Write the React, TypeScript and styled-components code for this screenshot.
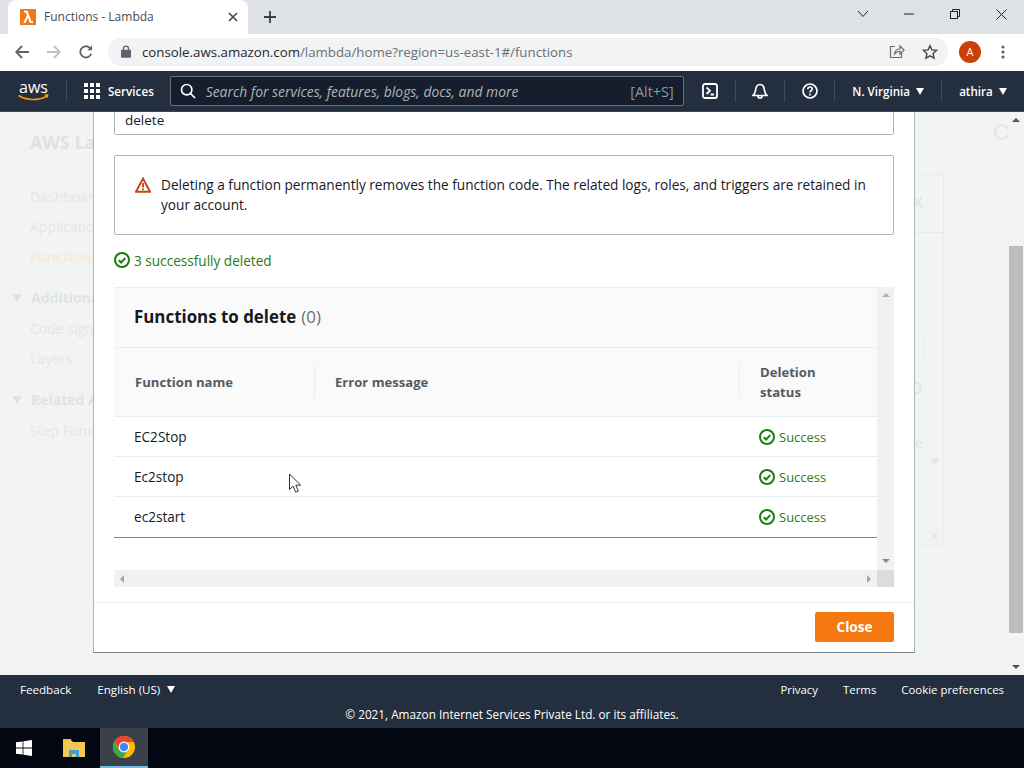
import React from "react";
import styled, { createGlobalStyle } from "styled-components";

const Global = createGlobalStyle`
  html, body { margin: 0; padding: 0; background: #fff; }
  * { box-sizing: border-box; }
  body { font-family: "Open Sans", "Noto Sans", "Liberation Sans", sans-serif; overflow: hidden; }
`;

const Page = styled.div`
  position: relative;
  width: 1024px;
  height: 768px;
  overflow: hidden;
  display: flex;
  flex-direction: column;
`;

/* ---------- Browser tab strip ---------- */
const TabStrip = styled.div`
  height: 34px;
  background: #dee1e6;
  display: flex;
  align-items: stretch;
  padding-left: 8px;
`;
const Tab = styled.div`
  width: 240px;
  background: #fff;
  border-radius: 8px 8px 0 0;
  display: flex;
  align-items: center;
  padding: 0 10px 1px 12px;
  gap: 8px;
`;
const TabTitle = styled.span`
  flex: 1;
  font-size: 12px;
  color: #4a4d51;
  font-family: "Open Sans", sans-serif;
`;
const NewTab = styled.div`
  width: 44px;
  display: flex;
  align-items: center;
  justify-content: center;
`;
const WindowControls = styled.div`
  margin-left: auto;
  display: flex;
  align-items: flex-start;
  padding-top: 7px;
`;
const WinButton = styled.div`
  width: 46px;
  height: 14px;
  display: flex;
  align-items: center;
  justify-content: center;
`;

/* ---------- Browser toolbar ---------- */
const Toolbar = styled.div`
  height: 37px;
  background: #fff;
  display: flex;
  align-items: center;
  padding: 0 0 2px 6px;
`;
const NavIcon = styled.div`
  width: 32px;
  height: 28px;
  display: flex;
  align-items: center;
  justify-content: center;
`;
const Omnibox = styled.div`
  width: 840px;
  height: 28px;
  margin-left: 6px;
  background: #f1f3f4;
  border-radius: 14px;
  display: flex;
  align-items: center;
  padding: 0 10px 0 13px;
`;
const Url = styled.div`
  flex: 1;
  margin-left: 11px;
  font-size: 13.28px;
  color: #6b6f73;
  font-family: "Open Sans", sans-serif;
  white-space: nowrap;
`;
const UrlHost = styled.span`
  color: #26282b;
`;
const OmniIcons = styled.div`
  display: flex;
  align-items: center;
  gap: 17px;
`;
const Avatar = styled.div`
  width: 22px;
  height: 22px;
  margin-left: 11px;
  border-radius: 50%;
  background: #cb400a;
  color: #fff;
  font-size: 11px;
  display: flex;
  align-items: center;
  justify-content: center;
`;
const MenuDots = styled.div`
  margin-left: 10px;
  width: 24px;
  display: flex;
  justify-content: center;
`;

/* ---------- AWS nav ---------- */
const AwsNav = styled.div`
  height: 41px;
  background: #232f3e;
  border-bottom: 1px solid #3a4654;
  display: flex;
  align-items: center;
  color: #fff;
`;
const LogoSlot = styled.div`
  width: 66px;
  padding-left: 18px;
  display: flex;
`;
const NavSep = styled.div`
  width: 1px;
  height: 22px;
  background: #3f4b5b;
`;
const ServicesBtn = styled.div`
  display: flex;
  align-items: center;
  margin-left: 17px;
  gap: 8px;
  font-size: 11.7px;
  font-weight: 600;
  width: 86px;
`;
const SearchBox = styled.div`
  width: 515px;
  height: 30px;
  margin-right: 2px;
  background: #161e2d;
  border: 1px solid #687078;
  border-radius: 2px;
  display: flex;
  align-items: center;
  padding: 0 9px 0 9px;
`;
const SearchText = styled.span`
  flex: 1;
  margin-left: 10px;
  font-style: italic;
  font-size: 13.9px;
  color: #aab7b8;
  white-space: nowrap;
`;
const SearchKey = styled.span`
  font-size: 14.4px;
  color: #8a9a9b;
`;
const NavIconSlot = styled.div`
  width: 49px;
  display: flex;
  justify-content: center;
`;
const NavDrop = styled.div<{ $w: number }>`
  width: ${(p) => p.$w}px;
  padding-left: 17px;
  display: flex;
  align-items: center;
  gap: 6px;
  font-size: 11.6px;
  font-weight: 600;
  white-space: nowrap;
`;
const Caret = styled.span`
  display: inline-block;
  width: 0;
  height: 0;
  border-left: 4px solid transparent;
  border-right: 4px solid transparent;
  border-top: 7px solid #fff;
`;

/* ---------- Content ---------- */
const Content = styled.div`
  position: relative;
  flex: 1;
  background: #f2f3f3;
  display: flex;
  overflow: hidden;
`;
const Sidebar = styled.div`
  width: 281px;
  padding: 20px 0 0 30px;
  border-right: 1px solid #eef0f0;
  color: #e3e6e6;
  font-size: 14px;
`;
const SideTitle = styled.div`
  font-size: 18px;
  font-weight: 700;
  color: #dfe2e2;
  margin-bottom: 30px;
  line-height: 20px;
`;
const SideLink = styled.div<{ $active?: boolean }>`
  height: 30px;
  line-height: 30px;
  color: ${(p) => (p.$active ? "#f8eadd" : "#e4e7e7")};
  font-weight: ${(p) => (p.$active ? 700 : 400)};
`;
const SideGroup = styled.div`
  height: 32px;
  line-height: 32px;
  margin: 10px 0 0 -18px;
  display: flex;
  align-items: center;
  gap: 9px;
  font-weight: 700;
  color: #e0e3e3;
`;
const SideCaret = styled.span`
  width: 0;
  height: 0;
  border-left: 5px solid transparent;
  border-right: 5px solid transparent;
  border-top: 8px solid #dfe2e2;
`;
const MainBg = styled.div`
  position: relative;
  flex: 1;
`;
const FaintCard = styled.div`
  position: absolute;
  left: 450px;
  top: 62px;
  width: 213px;
  height: 59px;
  border: 1px solid #e8eaea;
`;
const FaintPanel = styled.div`
  position: absolute;
  left: 450px;
  top: 121px;
  width: 213px;
  height: 313px;
  border-right: 1px solid #eaecec;
  border-bottom: 1px solid #e8eaea;
`;
const FaintClose = styled.svg`
  position: absolute;
  left: 632px;
  top: 84px;
`;
const FaintField = styled.div`
  position: absolute;
  left: 620px;
  top: 221px;
  width: 23px;
  height: 29px;
  border: 1px solid #eaecec;
`;
const FaintGear = styled.div`
  position: absolute;
  left: 627px;
  top: 269px;
  width: 14px;
  height: 14px;
  border: 3px solid #e6e8e8;
  border-radius: 50%;
`;
const FaintLetter = styled.span`
  position: absolute;
  left: 634px;
  top: 321px;
  font-size: 14px;
  line-height: 20px;
  color: #e3e5e5;
`;
const FaintTriangle = styled.span`
  position: absolute;
  left: 649px;
  top: 346px;
  width: 0;
  height: 0;
  border-left: 5px solid transparent;
  border-right: 5px solid transparent;
  border-top: 8px solid #e6e8e8;
`;
const FaintArrow = styled.span`
  position: absolute;
  left: 652px;
  top: 420px;
  width: 0;
  height: 0;
  border-top: 4px solid transparent;
  border-bottom: 4px solid transparent;
  border-left: 5px solid #e3e5e5;
`;
const FaintRail = styled.div`
  width: 25px;
  border-left: 1px solid #eef0f0;
  position: relative;
`;
const FaintInfo = styled.div`
  position: absolute;
  left: 10px;
  top: 12px;
  width: 16px;
  height: 16px;
  border: 2px solid #e3e6e6;
  border-radius: 50%;
`;
const PageScrollbar = styled.div`
  width: 16px;
  background: #f2f3f3;
  display: flex;
  flex-direction: column;
  align-items: center;
  justify-content: space-between;
  position: relative;
`;
const PageThumb = styled.div`
  position: absolute;
  left: 1px;
  top: 134px;
  width: 14px;
  height: 387px;
  background: #bcbcbc;
`;
const ArrowUp = styled.span<{ $c: string; $m?: number }>`
  width: 0;
  height: 0;
  margin-top: ${(p) => p.$m ?? 0}px;
  border-left: 4px solid transparent;
  border-right: 4px solid transparent;
  border-bottom: 4px solid ${(p) => p.$c};
`;
const ArrowDown = styled.span<{ $c: string; $m?: number }>`
  width: 0;
  height: 0;
  margin-bottom: ${(p) => p.$m ?? 0}px;
  border-left: 4px solid transparent;
  border-right: 4px solid transparent;
  border-top: 4px solid ${(p) => p.$c};
`;
const ArrowLeft = styled.span`
  width: 0;
  height: 0;
  border-top: 4px solid transparent;
  border-bottom: 4px solid transparent;
  border-right: 4px solid #a3a3a3;
`;
const ArrowRight = styled.span`
  width: 0;
  height: 0;
  border-top: 4px solid transparent;
  border-bottom: 4px solid transparent;
  border-left: 4px solid #a3a3a3;
`;

/* ---------- Modal ---------- */
const Modal = styled.div`
  position: absolute;
  left: 93px;
  top: 0;
  width: 822px;
  height: 541px;
  background: #fff;
  border: 1px solid #aab7b8;
  border-top: none;
  border-bottom: 1px solid #7c8688;
  display: flex;
  flex-direction: column;
  overflow: hidden;
`;
const ModalBody = styled.div`
  flex: 1;
  padding: 0 20px;
  margin-top: -9px;
  display: flex;
  flex-direction: column;
`;
const ConfirmInput = styled.div`
  height: 32px;
  flex: none;
  border: 1px solid #aab7b8;
  border-radius: 2px;
  padding: 0 10px;
  font-size: 13.5px;
  line-height: 32px;
  color: #16191f;
`;
const Alert = styled.div`
  margin-top: 20px;
  flex: none;
  height: 80px;
  border: 1px solid #aab7b8;
  border-radius: 2px;
  padding: 19px 20px 0 20px;
  display: flex;
  gap: 10px;
  font-size: 13.64px;
  line-height: 20px;
  color: #16191f;
`;
const AlertIcon = styled.div`
  flex: none;
  margin-top: 2px;
  height: 16px;
`;
const AlertText = styled.div`
  width: 716px;
`;
const SuccessLine = styled.div`
  margin-top: 15px;
  height: 20px;
  display: flex;
  align-items: center;
  gap: 4px;
  font-size: 13.6px;
  color: #2b7a12;
`;
const TablePanel = styled.div`
  margin-top: 17px;
  width: 780px;
  height: 300px;
  flex: none;
  display: grid;
  grid-template-columns: 763px 17px;
  grid-template-rows: 283px 17px;
`;
const TableArea = styled.div`
  display: flex;
  flex-direction: column;
  overflow: hidden;
`;
const PanelHeader = styled.div`
  height: 61px;
  flex: none;
  background: #fafafa;
  border-top: 1px solid #eaeded;
  border-bottom: 1px solid #eaeded;
  padding: 0 0 2px 20px;
  display: flex;
  align-items: center;
  font-size: 16.9px;
  font-weight: 700;
  color: #16191f;
`;
const PanelCount = styled.span`
  font-weight: 400;
  color: #687078;
  margin-left: 5px;
`;
const Grid = styled.div`
  display: grid;
  grid-template-columns: 200px 425px 138px;
`;
const HeadCell = styled.div`
  height: 69px;
  background: #fafafa;
  border-bottom: 1px solid #eaeded;
  display: flex;
  align-items: center;
  font-size: 13.1px;
  line-height: 20px;
  font-weight: 700;
  color: #545b64;
  padding-left: 21px;
  position: relative;
  & + &::before {
    content: "";
    position: absolute;
    left: 0;
    top: 16px;
    height: 34px;
    width: 1px;
    background: #eaeded;
  }
`;
const Cell = styled.div<{ $last?: boolean }>`
  height: ${(p) => (p.$last ? 41 : 40)}px;
  display: flex;
  align-items: center;
  font-size: 13.6px;
  color: #16191f;
  padding: 0 0 ${(p) => (p.$last ? 1 : 0)}px 20px;
  gap: 4px;
  border-bottom: 1px solid ${(p) => (p.$last ? "#7d8a8e" : "#eaeded")};
`;
const StatusText = styled.span`
  color: #2b7a12;
  font-size: 13px;
`;
const VTrack = styled.div`
  background: #f1f1f1;
  display: flex;
  flex-direction: column;
  align-items: center;
  justify-content: space-between;
  padding: 6px 0 7px;
`;
const HTrack = styled.div`
  background: #f1f1f1;
  display: flex;
  align-items: center;
  justify-content: space-between;
  padding: 0 6px;
`;
const ScrollCorner = styled.div`
  background: #dcdcdc;
`;
const ModalFooter = styled.div`
  height: 50px;
  flex: none;
  border-top: 1px solid #eaeded;
  display: flex;
  justify-content: flex-end;
  align-items: flex-start;
  padding: 9px 20px 0 0;
`;
const CloseButton = styled.button`
  width: 79px;
  height: 30px;
  padding: 0 0 2px;
  background: #f6790f;
  border: none;
  border-radius: 2px;
  color: #fff;
  font-family: inherit;
  font-size: 13.6px;
  font-weight: 700;
`;

/* ---------- Footer ---------- */
const AwsFooter = styled.div`
  height: 53px;
  background: #232f3e;
  color: #fff;
  font-size: 11.6px;
  font-weight: 500;
  padding: 0 20px;
  display: flex;
  flex-direction: column;
`;
const FooterTop = styled.div`
  height: 30px;
  display: flex;
  align-items: center;
  padding-bottom: 2px;
`;
const FooterLang = styled.div`
  margin-left: 26px;
  display: flex;
  align-items: center;
  gap: 7px;
`;
const FooterLinks = styled.div`
  margin-left: auto;
  display: flex;
  gap: 25px;
  font-size: 11.4px;
`;
const Copyright = styled.div`
  text-align: center;
  margin-top: 1px;
  font-size: 11.78px;
`;

/* ---------- Taskbar ---------- */
const Taskbar = styled.div`
  height: 40px;
  background: #030712;
  display: flex;
  align-items: stretch;
`;
const TaskSlot = styled.div<{ $w: number; $active?: boolean }>`
  width: ${(p) => p.$w}px;
  display: flex;
  align-items: center;
  justify-content: center;
  background: ${(p) => (p.$active ? "#3a4148" : "transparent")};
  border-bottom: ${(p) => (p.$active ? "2px solid #76b9ed" : "none")};
`;

const Cursor = styled.svg`
  position: absolute;
  left: 288px;
  top: 473px;
`;

const Check = () => (
  <svg width="16" height="16" viewBox="0 0 16 16" fill="none" stroke="#1d7a10" strokeWidth="2">
    <circle cx="8" cy="8" r="7" />
    <path d="M4.8 8.2l2.3 2.3 4.2-4.4" />
  </svg>
);

const rows = ["EC2Stop", "Ec2stop", "ec2start"];

export default function App() {
  return (
    <Page>
      <Global />
      <TabStrip>
        <Tab>
          <svg width="16" height="16" viewBox="0 0 16 16">
            <rect width="16" height="16" fill="#ed7b1c" />
            <path d="M3.2 14L6.9 6.5 6 3.6H4V1.8h3.5L11.3 12H13v2H9.8L8 8.8 5.5 14z" fill="#fff" />
          </svg>
          <TabTitle>Functions - Lambda</TabTitle>
          <svg width="10" height="10" viewBox="0 0 10 10" stroke="#45484c" strokeWidth="1.7">
            <path d="M1 1l8 8M9 1l-8 8" />
          </svg>
        </Tab>
        <NewTab>
          <svg width="12" height="12" viewBox="0 0 12 12" stroke="#3c4043" strokeWidth="1.8">
            <path d="M6 0v12M0 6h12" />
          </svg>
        </NewTab>
        <WindowControls>
          <WinButton>
            <svg width="12" height="8" viewBox="0 0 12 8" fill="none" stroke="#222" strokeWidth="1">
              <path d="M1 1l5 5.5L11 1" />
            </svg>
          </WinButton>
          <WinButton>
            <svg width="10" height="2" viewBox="0 0 10 2" stroke="#222" strokeWidth="1">
              <path d="M0 1h10" />
            </svg>
          </WinButton>
          <WinButton>
            <svg width="10" height="10" viewBox="0 0 10 10" fill="none" stroke="#222" strokeWidth="1">
              <rect x="0.5" y="2.5" width="7" height="7" />
              <path d="M2.5 2.5v-2h7v7h-2" />
            </svg>
          </WinButton>
          <WinButton>
            <svg width="11" height="11" viewBox="0 0 11 11" stroke="#222" strokeWidth="1">
              <path d="M0.5 0.5l10 10M10.5 0.5l-10 10" />
            </svg>
          </WinButton>
        </WindowControls>
      </TabStrip>

      <Toolbar>
        <NavIcon>
          <svg width="14" height="14" viewBox="0 0 14 14" fill="none" stroke="#5f6368" strokeWidth="1.8">
            <path d="M14 7H1.5M7 1L1.2 7 7 13" />
          </svg>
        </NavIcon>
        <NavIcon>
          <svg width="14" height="14" viewBox="0 0 14 14" fill="none" stroke="#bcc0c4" strokeWidth="1.8">
            <path d="M0 7h12.5M7 1l5.8 6L7 13" />
          </svg>
        </NavIcon>
        <NavIcon>
          <svg width="14" height="14" viewBox="0 0 14 14" fill="none" stroke="#5f6368" strokeWidth="1.8">
            <path d="M12.2 8.8A5.6 5.6 0 1 1 10.8 2.8L12.7 4.6" />
            <path d="M13 0.5V5.2H8.3z" fill="#5f6368" stroke="none" />
          </svg>
        </NavIcon>
        <Omnibox>
          <svg width="10" height="13" viewBox="0 0 10 13">
            <path d="M2.5 5V3.6a2.5 2.5 0 0 1 5 0V5" fill="none" stroke="#5f6368" strokeWidth="1.3" />
            <rect y="4.8" width="10" height="8" rx="1" fill="#5f6368" />
          </svg>
          <Url>
            <UrlHost>console.aws.amazon.com</UrlHost>/lambda/home?region=us-east-1#/functions
          </Url>
          <OmniIcons>
            <svg width="16" height="15" viewBox="0 0 16 15" fill="none" stroke="#6b6f73" strokeWidth="1.2">
              <path d="M6 2.5H1.5v11h11V9" />
              <path d="M5.5 10c.4-3 2.6-5 5.5-5V2l4 4-4 4V7.3c-2 0-4 .8-5.5 2.7z" />
            </svg>
            <svg width="16" height="16" viewBox="0 0 16 16" fill="none" stroke="#44474a" strokeWidth="1.4">
              <path d="M8 1.7l1.9 4.2 4.6.5-3.4 3.1.9 4.6L8 11.8l-4 2.3.9-4.6L1.5 6.4l4.6-.5z" />
            </svg>
          </OmniIcons>
        </Omnibox>
        <Avatar>A</Avatar>
        <MenuDots>
          <svg width="4" height="14" viewBox="0 0 4 14" fill="#5f6368">
            <circle cx="2" cy="2" r="1.6" />
            <circle cx="2" cy="7" r="1.6" />
            <circle cx="2" cy="12" r="1.6" />
          </svg>
        </MenuDots>
      </Toolbar>

      <AwsNav>
        <LogoSlot>
          <svg width="40" height="24" viewBox="0 0 40 24">
            <text x="1" y="14" fontFamily="'Open Sans', sans-serif" fontSize="17" textLength="29" lengthAdjust="spacingAndGlyphs" fill="#fff">aws</text>
            <path d="M0.5 16.5c8 5.2 20 5.2 28 .7" fill="none" stroke="#f90" strokeWidth="1.6" />
            <path d="M26 15.6l4.5-.6-.8 4.2z" fill="#f90" />
          </svg>
        </LogoSlot>
        <NavSep />
        <ServicesBtn>
          <svg width="16" height="16" viewBox="0 0 16 16" fill="#fff">
            {[0, 6, 12].flatMap((y) =>
              [0, 6, 12].map((x) => <rect key={`${x}-${y}`} x={x} y={y} width="4" height="4" />)
            )}
          </svg>
          Services
        </ServicesBtn>
        <SearchBox>
          <svg width="16" height="16" viewBox="0 0 16 16" fill="none" stroke="#fff" strokeWidth="1.7">
            <circle cx="6.7" cy="6.7" r="5.2" />
            <path d="M10.5 10.5L15 15" />
          </svg>
          <SearchText>Search for services, features, blogs, docs, and more</SearchText>
          <SearchKey>[Alt+S]</SearchKey>
        </SearchBox>
        <NavIconSlot>
          <svg width="16" height="16" viewBox="0 0 16 16" fill="none" stroke="#fff" strokeWidth="1.8">
            <rect x="1" y="1" width="14" height="14" rx="2" />
            <path d="M4.5 4.5L8 7.7 4.5 11M8.5 11.5h3.5" />
          </svg>
        </NavIconSlot>
        <NavSep />
        <NavIconSlot>
          <svg width="16" height="16" viewBox="0 0 16 16" fill="none" stroke="#fff" strokeWidth="1.7">
            <path d="M1 12.5c2-1.4 2.2-3 2.6-5.6C4 3.5 5.8 1.5 8 1.5s4 2 4.4 5.4c.4 2.6.6 4.2 2.6 5.6z" />
            <path d="M6 13c0 1.2.8 2 2 2s2-.8 2-2" />
          </svg>
        </NavIconSlot>
        <NavSep />
        <NavIconSlot>
          <svg width="16" height="16" viewBox="0 0 16 16" fill="none" stroke="#fff" strokeWidth="1.7">
            <circle cx="8" cy="8" r="7" />
            <path d="M5.8 6.2C5.9 4.8 6.8 4 8 4s2.2.8 2.2 2c0 1.6-2.2 1.7-2.2 3.5" />
            <path d="M8 10.8v1.6" />
          </svg>
        </NavIconSlot>
        <NavSep />
        <NavDrop $w={106}>
          N. Virginia <Caret />
        </NavDrop>
        <NavSep />
        <NavDrop $w={82}>
          athira <Caret />
        </NavDrop>
      </AwsNav>

      <Content>
        <Sidebar>
          <SideTitle>AWS Lambda</SideTitle>
          <SideLink>Dashboard</SideLink>
          <SideLink>Applications</SideLink>
          <SideLink $active>Functions</SideLink>
          <SideGroup>
            <SideCaret />
            Additional
          </SideGroup>
          <SideLink>Code signing</SideLink>
          <SideLink>Layers</SideLink>
          <SideGroup>
            <SideCaret />
            Related AWS
          </SideGroup>
          <SideLink>Step Functions</SideLink>
        </Sidebar>
        <MainBg>
          <FaintCard />
          <FaintPanel />
          <FaintClose width="10" height="12" viewBox="0 0 10 12" stroke="#e3e5e5" strokeWidth="2">
            <path d="M1 1l8 10M9 1L1 11" />
          </FaintClose>
          <FaintField />
          <FaintGear />
          <FaintLetter>e</FaintLetter>
          <FaintTriangle />
          <FaintArrow />
        </MainBg>
        <FaintRail>
          <FaintInfo />
        </FaintRail>
        <PageScrollbar>
          <PageThumb />
          <ArrowUp $c="#505050" $m={6} />
          <ArrowDown $c="#505050" $m={6} />
        </PageScrollbar>

        <Modal>
          <ModalBody>
            <ConfirmInput>delete</ConfirmInput>
            <Alert>
              <AlertIcon>
                <svg width="16" height="16" viewBox="0 0 16 16">
                  <path d="M8 1.5L15 14.7H1z" fill="none" stroke="#c8431f" strokeWidth="1.9" strokeLinejoin="miter" />
                  <path d="M8 6v4.6M8 11.4v1.8" stroke="#c8431f" strokeWidth="1.9" />
                </svg>
              </AlertIcon>
              <AlertText>
                Deleting a function permanently removes the function code. The related logs, roles, and triggers are retained in your account.
              </AlertText>
            </Alert>
            <SuccessLine>
              <Check />3 successfully deleted
            </SuccessLine>
            <TablePanel>
              <TableArea>
                <PanelHeader>
                  Functions to delete<PanelCount>(0)</PanelCount>
                </PanelHeader>
                <Grid>
                  <HeadCell>Function name</HeadCell>
                  <HeadCell>Error message</HeadCell>
                  <HeadCell>
                    Deletion
                    <br />
                    status
                  </HeadCell>
                  {rows.map((r, i) => (
                    <React.Fragment key={r}>
                      <Cell $last={i === 2}>{r}</Cell>
                      <Cell $last={i === 2} />
                      <Cell $last={i === 2}>
                        <Check />
                        <StatusText>Success</StatusText>
                      </Cell>
                    </React.Fragment>
                  ))}
                </Grid>
              </TableArea>
              <VTrack>
                <ArrowUp $c="#b0b0b0" />
                <ArrowDown $c="#8a8a8a" />
              </VTrack>
              <HTrack>
                <ArrowLeft />
                <ArrowRight />
              </HTrack>
              <ScrollCorner />
            </TablePanel>
          </ModalBody>
          <ModalFooter>
            <CloseButton>Close</CloseButton>
          </ModalFooter>
        </Modal>
      </Content>

      <AwsFooter>
        <FooterTop>
          Feedback
          <FooterLang>
            English (US) <Caret />
          </FooterLang>
          <FooterLinks>
            <span>Privacy</span>
            <span>Terms</span>
            <span>Cookie preferences</span>
          </FooterLinks>
        </FooterTop>
        <Copyright>© 2021, Amazon Internet Services Private Ltd. or its affiliates.</Copyright>
      </AwsFooter>

      <Taskbar>
        <TaskSlot $w={48}>
          <svg width="16" height="16" viewBox="0 0 16 16" fill="#fff">
            <path d="M0 2.3l6.6-.9v6.2H0zM7.4 1.3L16 0v7.6H7.4zM0 8.4h6.6v6.2L0 13.7zM7.4 8.4H16V16l-8.6-1.2z" />
          </svg>
        </TaskSlot>
        <TaskSlot $w={52}>
          <svg width="22" height="18" viewBox="0 0 22 18">
            <path d="M0 1h8l2 2h12v15H0z" fill="#f3c752" />
            <path d="M0 0h8v2H0z" fill="#e8b93e" />
            <path d="M6 11h10v7h-3v-3h-4v3H6z" fill="#3aa0da" />
          </svg>
        </TaskSlot>
        <TaskSlot $w={48} $active>
          <svg width="24" height="24" viewBox="0 0 24 24">
            <circle cx="12" cy="12" r="11" fill="#fbbc05" />
            <path d="M12 1a11 11 0 0 0-9.5 5.5L7 14.5 12 7h9.5A11 11 0 0 0 12 1z" fill="#ea4335" />
            <path d="M2.5 6.5A11 11 0 0 0 11 23l5-8.5-9.2.4z" fill="#34a853" />
            <circle cx="12" cy="12" r="5.4" fill="#fff" />
            <circle cx="12" cy="12" r="4.2" fill="#4285f4" />
          </svg>
        </TaskSlot>
      </Taskbar>

      <Cursor width="14" height="21" viewBox="0 0 14 21">
        <path d="M1.5 1v15.5l3.6-3.3 2.6 6 2.7-1.2-2.6-5.8h4.8z" fill="#fff" stroke="#2f3237" strokeWidth="1" />
      </Cursor>
    </Page>
  );
}
